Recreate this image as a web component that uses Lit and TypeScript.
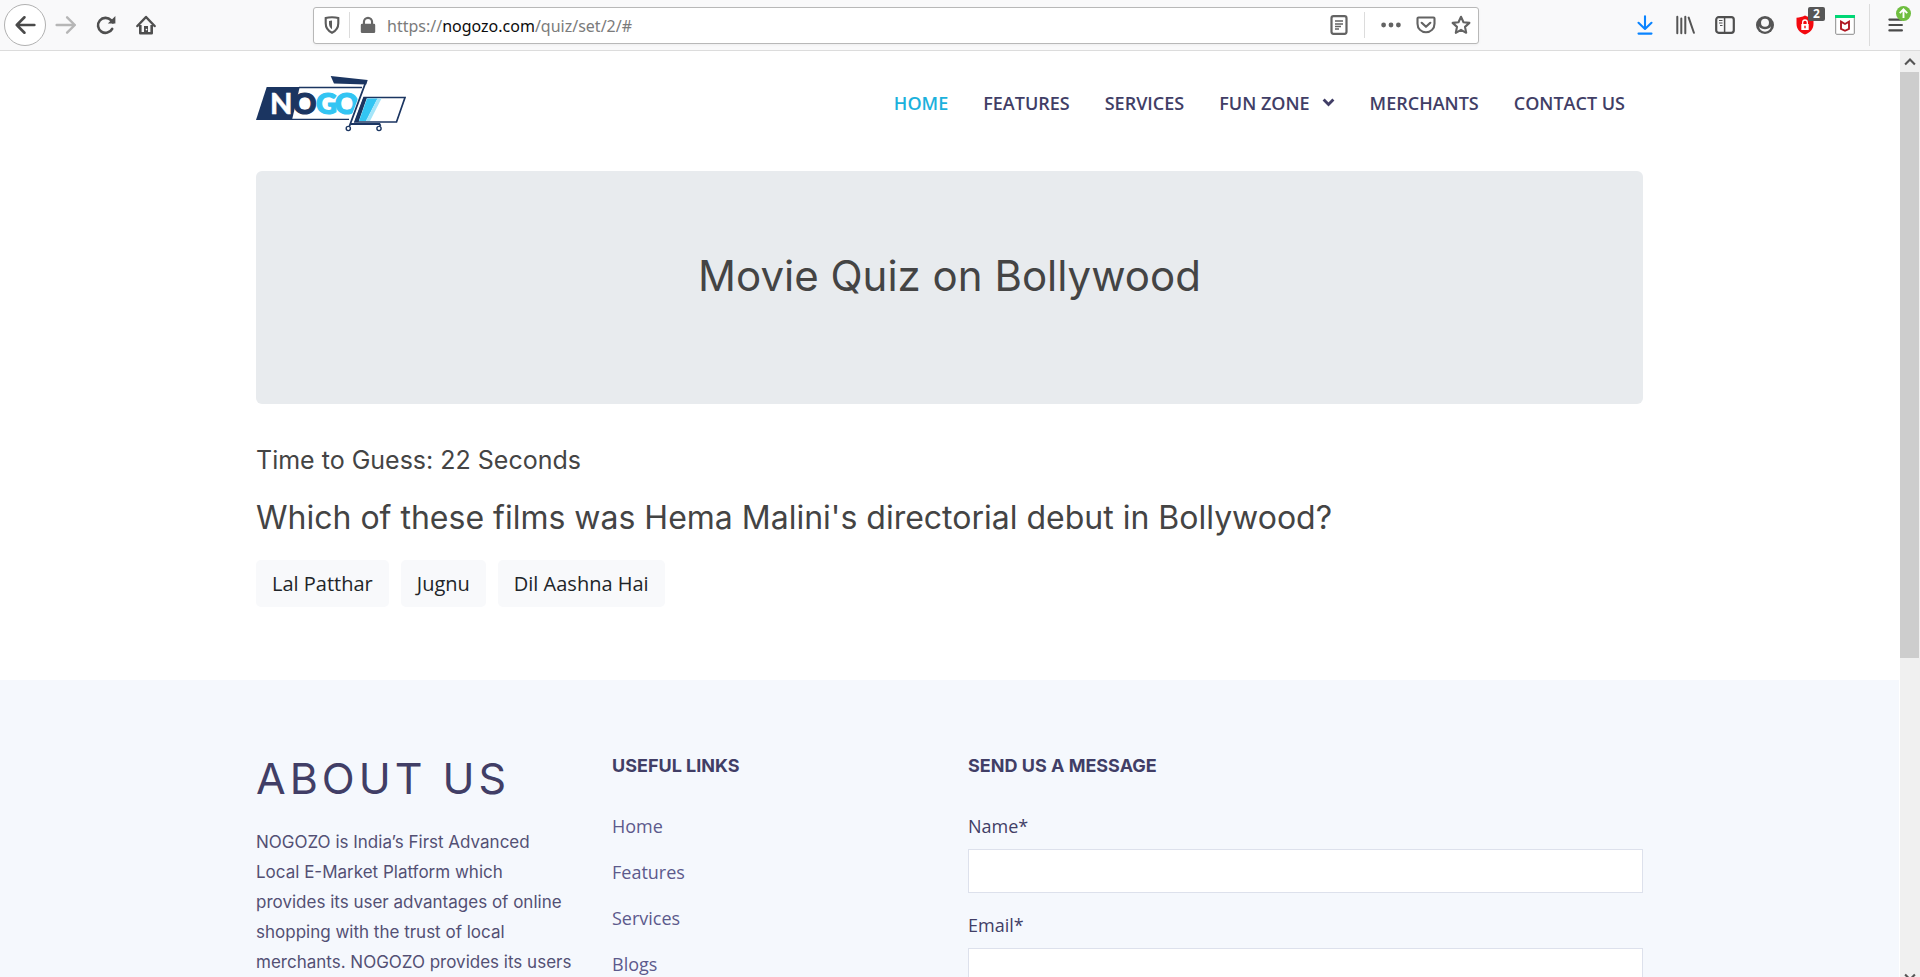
import { LitElement, html, css, svg } from "lit";
import { customElement } from "lit/decorators.js";

const icon = (body: unknown, size = 20) => html`<svg
  class="icon"
  width=${size}
  height=${size}
  viewBox="0 0 20 20"
  aria-hidden="true"
>${body}</svg>`;

const icons = {
  back: svg`<path d="M18.5 10H2.5M9.5 3 2.5 10l7 7" fill="none" stroke="#4a4a4a" stroke-width="2.4" stroke-linecap="round" stroke-linejoin="round"/>`,
  forward: svg`<path d="M1.5 10h16.5M11 3l7 7-7 7" fill="none" stroke="#b6b6b6" stroke-width="2.2" stroke-linecap="round" stroke-linejoin="round"/>`,
  reload: svg`<path d="M16.2 13.8A7.5 7.5 0 1 1 15 5.2L17 7.4" fill="none" stroke="#4f4f4f" stroke-width="2.6" stroke-linecap="round"/><path d="M19.4 1v7.6h-7.6z" fill="#4f4f4f"/>`,
  home: svg`<path d="M1.4 11 10 2l8.600 9" fill="none" stroke="#4f4f4f" stroke-width="2.5" stroke-linecap="round" stroke-linejoin="round"/><path d="M4.300 10v8.300h11.400V10" fill="none" stroke="#4f4f4f" stroke-width="2.600" stroke-linejoin="round"/><path d="M8 18.500v-7.500h4v7.500z" fill="#4f4f4f"/><circle cx="10.500" cy="14.600" r=".8" fill="#fff"/>`,
  shield: svg`<path d="M10 2.200c2.500 0 4.600.3 6.300.9v5.200c0 4.600-2 7.500-6.300 9.500-4.300-2-6.300-4.900-6.300-9.500V3.100C5.400 2.500 7.500 2.200 10 2.200z" fill="none" stroke="#5c5c5c" stroke-width="2.100"/><path d="M10 5.500v8.800C7.800 12.800 7 11 7 8.600V6z" fill="#5c5c5c"/>`,
  lock: svg`<path d="M5.500 9.500V6.500a4.500 4.500 0 0 1 9 0v3" fill="none" stroke="#666" stroke-width="2.400"/><rect x="2" y="8.500" width="16" height="10.500" rx="1.500" fill="#666"/>`,
  reader: svg`<rect x="2.500" y="1.200" width="15" height="17.600" rx="2" fill="none" stroke="#636363" stroke-width="2.200"/><path d="M6 6h8M6 9h8M6 11.500h6M6 14h4" stroke="#636363" stroke-width="1.500"/>`,
  dots: svg`<g fill="#636363"><circle cx="2.600" cy="10" r="2.400"/><circle cx="10" cy="10" r="2.400"/><circle cx="17.400" cy="10" r="2.400"/></g>`,
  pocket: svg`<path d="M2.500 2.500h15c.6 0 1 .4 1 1v5.200c0 5-3.800 8.600-8.500 8.600S1.500 13.700 1.500 8.700V3.500c0-.6.4-1 1-1z" fill="none" stroke="#636363" stroke-width="2.100"/><path d="m5.700 7.800 4.300 4 4.300-4" fill="none" stroke="#636363" stroke-width="2.200" stroke-linecap="round" stroke-linejoin="round"/>`,
  star: svg`<path d="m10 1.800 2.500 5.400 5.900.7-4.400 4 1.200 5.900L10 14.900l-5.200 2.900L6 11.900l-4.400-4 5.900-.7z" fill="none" stroke="#636363" stroke-width="2.100" stroke-linejoin="round"/>`,
  download: svg`<path d="M10 1.200v12.300M3.500 7.800 10 14l6.500-6.200M3.500 18.600h13" fill="none" stroke="#0a84ff" stroke-width="2.100" stroke-linecap="round" stroke-linejoin="round"/>`,
  library: svg`<path d="M2.300 1.800v16.400M6.300 3.500v14.700M10.300 1.800v16.400M13.700 2.600l5.200 15.200" fill="none" stroke="#555" stroke-width="2" stroke-linecap="round"/>`,
  sidebar: svg`<rect x="1.200" y="2.200" width="17.600" height="15.600" rx="2.500" fill="none" stroke="#4f4f4f" stroke-width="2.200"/><path d="M9.600 2.500v15" stroke="#4f4f4f" stroke-width="1.500"/><path d="M4 5.500h3.500M4 8h3.500M5 10.500h2.500" stroke="#4f4f4f" stroke-width="1.200"/>`,
  account: svg`<circle cx="10" cy="10" r="9" fill="#555"/><circle cx="10" cy="7.800" r="4" fill="#f9f9fa"/><path d="M4 11.300c1.400 2.200 3.500 3 6 3s4.600-.8 6-3c-.6 3.700-2.900 5.400-6 5.400s-5.400-1.700-6-5.400z" fill="#f9f9fa"/>`,
  blocker: svg`<path d="M10 .5c2.800 1.400 5.500 2 8.500 2.200v6c0 5.400-3.400 8.800-8.500 10.800-5.100-2-8.500-5.400-8.500-10.800v-6C4.500 2.500 7.200 1.900 10 .5z" fill="#f3090f"/><rect x="6.300" y="9" width="7.400" height="6" fill="#fff"/><path d="M7.700 9V7.300a2.300 2.300 0 0 1 4.600 0V9" fill="none" stroke="#fff" stroke-width="1.300"/><path d="M10 10.800v2.400" stroke="#f3090f" stroke-width="1.400"/>`,
  mcafee: svg`<rect x=".7" y=".7" width="18.600" height="18.600" rx="1" fill="#fff" stroke="#8a8a8a"/><path d="M0 0h20v3H0z" fill="#00d775"/><path d="M6 6.600 10 9l4-2.400v7.200L10 15.800l-4-2z" fill="none" stroke="#b01722" stroke-width="1.900"/>`,
  menu: svg`<path d="M1.500 4h14M1.500 10h14M1.500 16h14" stroke="#4a4a4a" stroke-width="2.300" stroke-linecap="round"/>`,
  update: svg`<circle cx="10" cy="10" r="10" fill="#6fbe3f"/><path d="M10 16V5M5 9.600 10 4.600l5 5" fill="none" stroke="#fff" stroke-width="2.500"/>`,
  chevron: svg`<path d="m2.500 5.500 7.500 7.500 7.500-7.500" fill="none" stroke="#413e66" stroke-width="4.500"/>`,
  up: svg`<path d="m3 13.500 7-7 7 7" fill="none" stroke="#555" stroke-width="3"/>`,
  down: svg`<path d="m3 6.500 7 7 7-7" fill="none" stroke="#555" stroke-width="3"/>`,
};

@customElement("browser-toolbar")
export class BrowserToolbar extends LitElement {
  static styles = css`
    :host {
      display: flex;
      align-items: center;
      box-sizing: border-box;
      height: 51px;
      flex: none;
      background: #f9f9fa;
      border-bottom: 1px solid #dcdcdc;
    }
    .icon { display: block; flex: none; }
    button {
      display: flex;
      align-items: center;
      justify-content: center;
      box-sizing: border-box;
      border: 0;
      padding: 0;
      background: none;
      width: 40px;
      height: 40px;
      flex: none;
      position: relative;
    }
    .nav { display: flex; align-items: center; padding-left: 4px; }
    .back {
      width: 42px;
      height: 42px;
      border: 1px solid #b1b1b1;
      border-radius: 50%;
      background: #fff;
    }
    .address {
      display: flex;
      align-items: center;
      box-sizing: border-box;
      height: 37px;
      flex: 1;
      margin-left: 147px;
      margin-right: 146px;
      border: 1px solid #b8b8b8;
      border-radius: 3px;
      background: #fff;
      box-shadow: 0 1px 3px #0000000d;
    }
    .address button { width: 35px; height: 34px; }
    .line { width: 1px; height: 26px; background: #dcdcdc; flex: none; }
    .spaced { margin: 0 8px; }
    .url {
      display: flex;
      flex: 1;
      min-width: 0;
      padding: 2px 0 0 2px;
      font: 16px/24px "Noto Sans", "Open Sans", sans-serif;
      color: #7b7b7b;
    }
    .url b { font-weight: 400; color: #0c0c0d; }
    .tools { display: flex; align-items: center; }
    .tall { height: 42px; margin: 0 4px; }
    .menu { width: 46px; }
    .badge {
      position: absolute;
      left: 23px;
      top: 2px;
      width: 17px;
      height: 14px;
      border-radius: 2px;
      background: #575757;
      color: #fff;
      font: 700 12px/14px "Open Sans", sans-serif;
      text-align: center;
    }
    .update { position: absolute; left: 22px; top: 1px; }
  `;
  render() {
    return html`
      <div class="nav">
        <button class="back" aria-label="Back">${icon(icons.back, 22)}</button>
        <button aria-label="Forward">${icon(icons.forward, 22)}</button>
        <button aria-label="Reload">${icon(icons.reload)}</button>
        <button aria-label="Home">${icon(icons.home)}</button>
      </div>
      <div class="address">
        <button aria-label="Tracking protection">${icon(icons.shield)}</button>
        <span class="line"></span>
        <button aria-label="Secure connection">${icon(icons.lock, 18)}</button>
        <div class="url"><span>https://</span><b>nogozo.com</b><span>/quiz/set/2/#</span></div>
        <button aria-label="Reader view">${icon(icons.reader)}</button>
        <span class="line spaced"></span>
        <button aria-label="Page actions">${icon(icons.dots)}</button>
        <button aria-label="Save to Pocket">${icon(icons.pocket)}</button>
        <button aria-label="Bookmark">${icon(icons.star)}</button>
      </div>
      <div class="tools">
        <button aria-label="Downloads">${icon(icons.download)}</button>
        <button aria-label="Library">${icon(icons.library)}</button>
        <button aria-label="Sidebars">${icon(icons.sidebar)}</button>
        <button aria-label="Account">${icon(icons.account)}</button>
        <button aria-label="Blocker">${icon(icons.blocker)}<span class="badge">2</span></button>
        <button aria-label="WebAdvisor">${icon(icons.mcafee)}</button>
        <span class="line tall"></span>
        <button class="menu" aria-label="Menu">
          ${icon(icons.menu, 18)}<span class="update">${icon(icons.update, 15)}</span>
        </button>
      </div>
    `;
  }
}

@customElement("nogozo-logo")
export class NogozoLogo extends LitElement {
  static styles = css`
    :host { display: block; }
    svg { display: block; }
    text { font-family: Lato, sans-serif; font-weight: 900; font-size: 29px; stroke-width: 1.2px; }
    .white { fill: #fff; stroke: #fff; stroke-width: 0.4px; }
    .navy { fill: #1b3561; stroke: #1b3561; }
    .sky { fill: #33c5f3; stroke: #33c5f3; }
  `;
  render() {
    return html`<svg width="150" height="56" viewBox="0 0 150 56" role="img" aria-label="Nogozo">
      <path d="M43 11.500h63M36 43.300h57" stroke="#1b3561" stroke-width="1.300" />
      <path d="M10.700 11h33L36 44H0z" fill="#1b3561" />
      <text class="white" x="14" y="38">N</text>
      <text class="navy" x="37" y="38">O</text>
      <text class="sky" x="60" y="38">G</text>
      <text class="sky" x="79" y="38">O</text>
      <path d="M108 7h8L101 49h-9z" fill="#fff" />
      <path d="M74.700 0 111.700 4l-1.500 4.500L78 7.500z" fill="#1b3561" />
      <path d="M109.800 6 93.500 50M95 48h28.500l1 2" fill="none" stroke="#1b3561" stroke-width="1.800" />
      <path d="M108 21.500h41l-8.500 24.500H99z" fill="#fff" stroke="#1b3561" stroke-width="1.700" />
      <path d="M107.500 21.500h3.500L102.500 46h-4z" fill="#1b3561" />
      <path d="M111 22.500h10.500L110 45h-7z" fill="#33c5f3" />
      <path d="M121.500 22.500h4L114 45h-4z" fill="#a5e5f9" />
      <circle cx="92.300" cy="52.500" r="2.100" fill="#fff" stroke="#1b3561" stroke-width="1.400" />
      <circle cx="123" cy="52.500" r="2.100" fill="#fff" stroke="#1b3561" stroke-width="1.400" />
    </svg>`;
  }
}

@customElement("app-root")
export class AppRoot extends LitElement {
  static styles = css`
    :host {
      display: flex;
      flex-direction: column;
      height: 100vh;
      overflow: hidden;
      background: #fff;
      font-family: "Open Sans", sans-serif;
      color: #444;
    }
    .window { display: flex; flex: 1; min-height: 0; }
    .page { flex: 1; min-width: 0; overflow: hidden; }
    .container { max-width: 1387px; margin: 0 auto; padding: 0 20px; }
    a { color: inherit; text-decoration: none; }
    header { display: flex; align-items: center; justify-content: space-between; padding: 25px 0 39px; }
    nav { display: flex; gap: 35px; padding: 0 18px 3px 0; font-size: 18px; line-height: 24px; font-weight: 600; color: #413e66; }
    nav a { display: flex; align-items: center; gap: 12px; }
    nav .active { color: #1bb1dc; }
    h1, h2, h3, h4, p { margin: 0; font-family: Inter, "Open Sans", sans-serif; font-weight: 400; }
    .banner {
      box-sizing: border-box;
      padding: 81px 40px 104px;
      border-radius: 6px;
      background: #e8ebee;
      text-align: center;
    }
    h1 { font-size: 42px; line-height: 48px; }
    .timer { margin-top: 41px; font-size: 25px; line-height: 30px; }
    .question { margin-top: 25px; font-size: 32px; line-height: 36px; }
    .answers { display: flex; gap: 12px; margin: 24px 0 73px; }
    .answers button {
      height: 47px;
      padding: 0 16px;
      border: 0;
      border-radius: 5px;
      background: #f8f9fb;
      color: #212529;
      font: 20px/30px "Open Sans", sans-serif;
    }
    footer { background: #f5f8fd; color: #413e66; padding: 74px 0; min-height: 300px; }
    .columns { display: grid; grid-template-columns: repeat(4, minmax(0, 1fr)); gap: 37px; }
    .about h2 { margin-bottom: 25px; font-size: 43px; line-height: 48px; letter-spacing: 4px; }
    .about p { font-size: 17px; line-height: 30px; color: #535074; }
    .about p span { display: block; white-space: nowrap; }
    h4 { font-size: 18px; line-height: 24px; font-weight: 700; }
    ul { list-style: none; margin: 36px 0 0; padding: 0; }
    li { height: 46px; font-size: 18px; line-height: 24px; color: #5c5a8c; }
    .message { grid-column: span 2; }
    form { margin-top: 36px; }
    label { display: block; font-size: 18px; line-height: 24px; margin-bottom: 11px; }
    input {
      display: block;
      box-sizing: border-box;
      width: 100%;
      height: 44px;
      margin-bottom: 20px;
      border: 1px solid #dde1ec;
      background: #fff;
      font: 16px "Open Sans", sans-serif;
      padding: 0 12px;
    }
    .scrollbar {
      display: flex;
      flex-direction: column;
      width: 20px;
      margin-bottom: -10px;
      border-left: 1px solid #fff;
      background: #f0f0f0;
      flex: none;
    }
    .arrow { display: flex; align-items: center; justify-content: center; height: 21px; flex: none; }
    .track { flex: 1; }
    .thumb { width: 19px; height: 65.5%; background: #cdcdcd; }
  `;

  private menu = ["HOME", "FEATURES", "SERVICES", "FUN ZONE", "MERCHANTS", "CONTACT US"];
  private answers = ["Lal Patthar", "Jugnu", "Dil Aashna Hai"];
  private about = [
    "NOGOZO is India’s First Advanced",
    "Local E-Market Platform which",
    "provides its user advantages of online",
    "shopping with the trust of local",
    "merchants. NOGOZO provides its users",
  ];
  private links = ["Home", "Features", "Services", "Blogs"];
  private fields = ["Name", "Email"];

  render() {
    return html`
      <browser-toolbar></browser-toolbar>
      <div class="window">
        <div class="page">
          <main class="container">
            <header>
              <a href="#" aria-label="Nogozo"><nogozo-logo></nogozo-logo></a>
              <nav>
                ${this.menu.map(
                  (m, i) => html`<a href="#" class=${i === 0 ? "active" : ""}
                    >${m}${m === "FUN ZONE" ? icon(icons.chevron, 13) : ""}</a
                  >`
                )}
              </nav>
            </header>
            <section class="banner"><h1>Movie Quiz on Bollywood</h1></section>
            <h3 class="timer">Time to Guess: 22 Seconds</h3>
            <h2 class="question">Which of these films was Hema Malini's directorial debut in Bollywood?</h2>
            <div class="answers">${this.answers.map((a) => html`<button>${a}</button>`)}</div>
          </main>
          <footer>
            <div class="container columns">
              <section class="about">
                <h2>ABOUT US</h2>
                <p>${this.about.map((l) => html`<span>${l} </span>`)}</p>
              </section>
              <section>
                <h4>USEFUL LINKS</h4>
                <ul>${this.links.map((l) => html`<li><a href="#">${l}</a></li>`)}</ul>
              </section>
              <section class="message">
                <h4>SEND US A MESSAGE</h4>
                <form>
                  ${this.fields.map(
                    (f) => html`<label for=${f}>${f}*</label><input id=${f} type="text" />`
                  )}
                </form>
              </section>
            </div>
          </footer>
        </div>
        <div class="scrollbar" aria-hidden="true">
          <div class="arrow">${icon(icons.up, 14)}</div>
          <div class="track"><div class="thumb"></div></div>
          <div class="arrow">${icon(icons.down, 14)}</div>
        </div>
      </div>
    `;
  }
}
